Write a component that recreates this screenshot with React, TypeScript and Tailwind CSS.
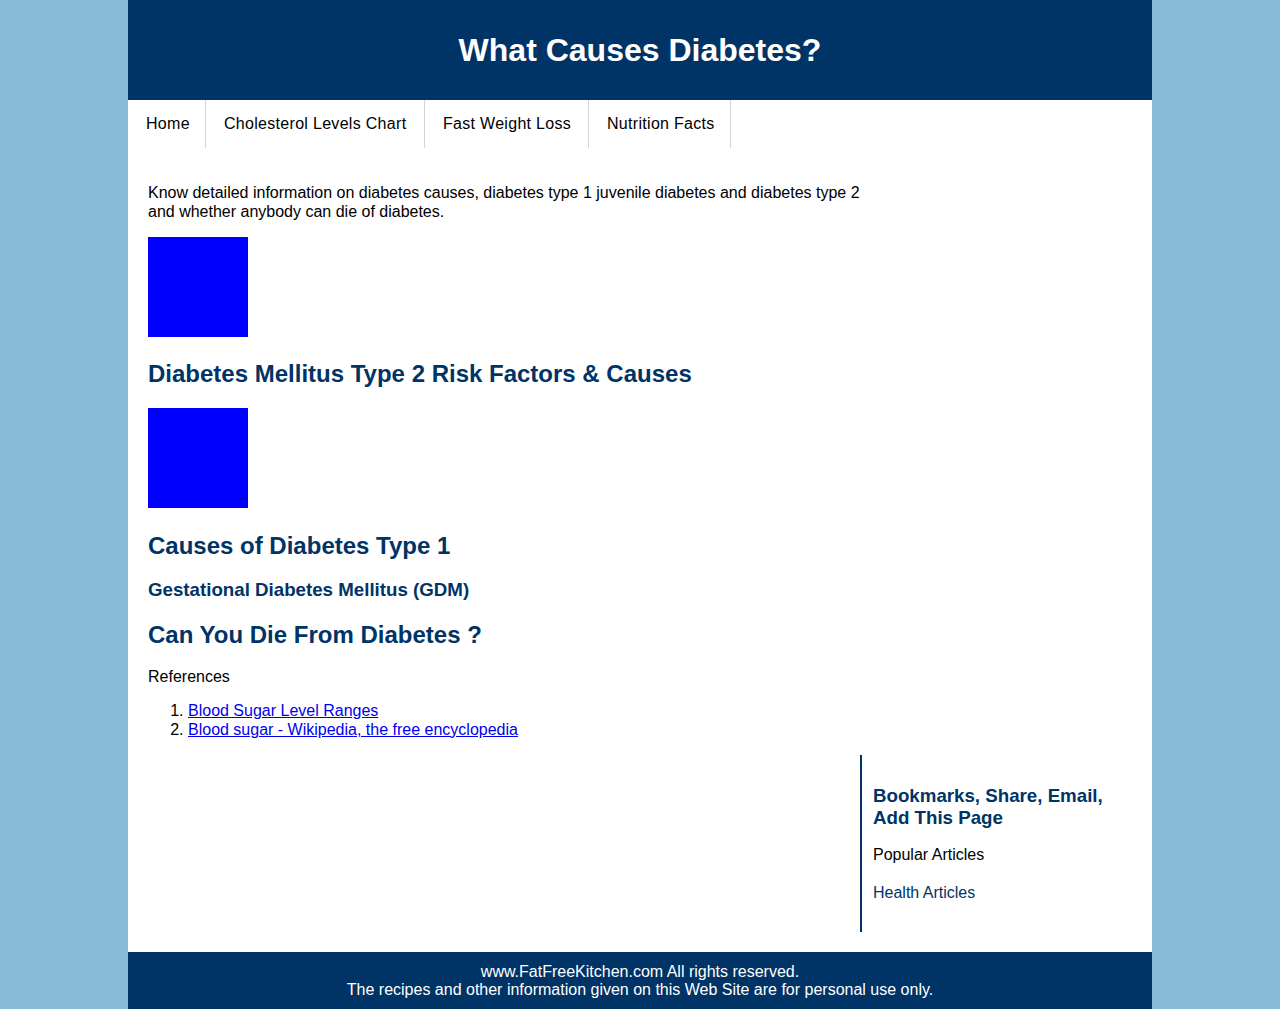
import React from "react";

const font = { fontFamily: '"Liberation Sans", Arial, sans-serif' };

export default function App() {
  const nav = [
    { label: "Home", w: "w-[78px]" },
    { label: "Cholesterol Levels Chart", w: "w-[219px]" },
    { label: "Fast Weight Loss", w: "w-[164px]" },
    { label: "Nutrition Facts", w: "w-[142px]" },
  ];
  return (
    <div className="min-h-[1009px] bg-[#87bbd8]" style={font}>
      <div className="mx-auto w-[1024px] bg-white">
        <header className="flex h-[100px] items-center justify-center bg-[#003366]">
          <h1 className="text-[32px] font-bold leading-[37px] text-white">What Causes Diabetes?</h1>
        </header>
        <nav className="flex h-[48px]">
          {nav.map((n) => (
            <div
              key={n.label}
              className={`${n.w} flex items-center border-r border-[#d4d4d4] pl-[18px] text-[16px] leading-[18px] tracking-[0.3px] text-black`}
            >
              {n.label}
            </div>
          ))}
        </nav>
        <div className="px-5 pb-5">
          <div className="w-[712px]">
            <p className="mt-[35px] text-[16px] leading-[19px] text-black">
              Know detailed information on diabetes causes, diabetes type 1 juvenile diabetes and diabetes type 2 and whether anybody can die of diabetes.
            </p>
            <div className="mt-4 h-[100px] w-[100px] bg-[#0000ff]" />
            <h2 className="mt-[23px] text-[24px] font-bold leading-[28px] text-[#003366]">
              Diabetes Mellitus Type 2 Risk Factors &amp; Causes
            </h2>
            <div className="mt-5 h-[100px] w-[100px] bg-[#0000ff]" />
            <h2 className="mt-[24px] text-[24px] font-bold leading-[28px] text-[#003366]">Causes of Diabetes Type 1</h2>
            <h3 className="mt-[19px] text-[18.72px] font-bold leading-[22px] text-[#003366]">
              Gestational Diabetes Mellitus (GDM)
            </h3>
            <h2 className="mt-5 text-[24px] font-bold leading-[28px] text-[#003366]">Can You Die From Diabetes ?</h2>
            <p className="mt-[19px] text-[16px] leading-[18px] text-black">References</p>
            <ol className="mt-[15px] list-decimal pl-10 text-[16px] leading-[19px] text-black">
              <li>
                <a href="#" className="text-[#0000ee] underline">Blood Sugar Level Ranges</a>
              </li>
              <li>
                <a href="#" className="text-[#0000ee] underline">Blood sugar - Wikipedia, the free encyclopedia</a>
              </li>
            </ol>
          </div>
          <div className="mt-4 flex justify-end">
            <aside className="w-[272px] border-l-2 border-[#003366] pb-[30px] pl-[11px] pr-5 pt-[30px]">
              <h3 className="text-[18.72px] font-bold leading-[22px] text-[#003366]">
                Bookmarks, Share, Email, Add This Page
              </h3>
              <p className="mt-[17px] text-[16px] leading-[18px] text-black">Popular Articles</p>
              <p className="mt-5 text-[16px] leading-[18px] text-[#003366]">Health Articles</p>
            </aside>
          </div>
        </div>
        <footer className="bg-[#003366] pb-[20px] pt-[11px] text-center text-[16px] leading-[18px] text-white">
          <p>www.FatFreeKitchen.com All rights reserved.</p>
          <p>The recipes and other information given on this Web Site are for personal use only.</p>
        </footer>
      </div>
    </div>
  );
}
